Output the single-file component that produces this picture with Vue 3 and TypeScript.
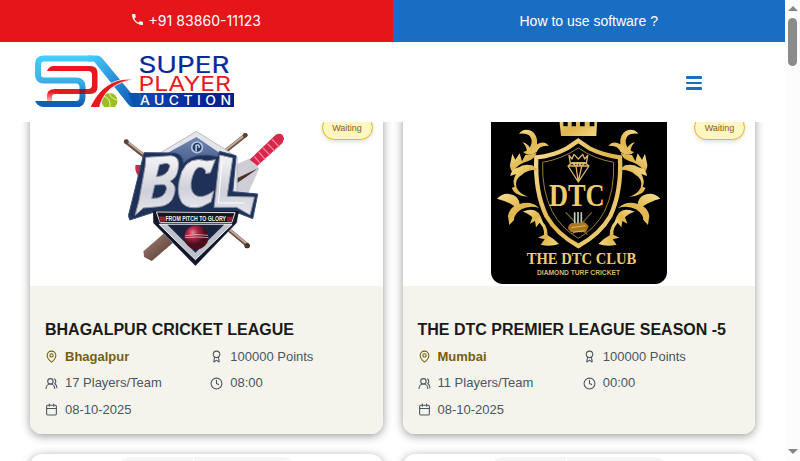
<script setup lang="ts">
interface Auction {
  id: number
  logo: 'bcl' | 'dtc' | 'blank'
  title: string
  city: string
  points: string
  players: string
  time: string
  date: string
}

const auctions: Auction[] = [
  { id: 1, logo: 'bcl', title: 'BHAGALPUR CRICKET LEAGUE', city: 'Bhagalpur', points: '100000 Points', players: '17 Players/Team', time: '08:00', date: '08-10-2025' },
  { id: 2, logo: 'dtc', title: 'THE DTC PREMIER LEAGUE SEASON -5', city: 'Mumbai', points: '100000 Points', players: '11 Players/Team', time: '00:00', date: '08-10-2025' },
  { id: 3, logo: 'blank', title: '', city: '', points: '', players: '', time: '', date: '' },
  { id: 4, logo: 'blank', title: '', city: '', points: '', players: '', time: '', date: '' },
]

const leafSides = ['', 'translate(592 0) scale(-1 1)']
</script>

<template>
  <div class="window">
    <div class="page">
      <div class="topbar">
        <a class="phone">
          <svg class="phone-icon" viewBox="3 3 18 18"><path fill="#fff" d="M6.540 3H4a1 1 0 0 0-1 1c0 9.390 7.610 17 17 17a1 1 0 0 0 1-1v-3.490a1 1 0 0 0-1-1c-1.240 0-2.450-.2-3.570-.57a1 1 0 0 0-1.020.240l-2.200 2.200a15.050 15.050 0 0 1-6.590-6.590l2.200-2.210a1 1 0 0 0 .250-1A11.360 11.360 0 0 1 8.500 4a1 1 0 0 0-1-1z" /></svg>
          <span>+91 83860-11123</span>
        </a>
        <a class="howto">How to use software ?</a>
      </div>

      <header class="navbar">
        <svg class="brand" viewBox="35 54 200 54">
          <defs>
            <linearGradient id="sky" gradientUnits="userSpaceOnUse" x1="88" y1="56" x2="140" y2="107">
              <stop offset="0" stop-color="#45cdff" /><stop offset=".4" stop-color="#2f98dd" /><stop offset="1" stop-color="#0b52b0" />
            </linearGradient>
            <linearGradient id="skyS" gradientUnits="userSpaceOnUse" x1="0" y1="56" x2="0" y2="107">
              <stop offset="0" stop-color="#45d0ff" /><stop offset=".5" stop-color="#3aaeea" /><stop offset="1" stop-color="#0b57a8" />
            </linearGradient>
            <linearGradient id="bar" x1="0" y1="0" x2="1" y2="0">
              <stop offset="0" stop-color="#0b57b5" /><stop offset=".6" stop-color="#052a9b" /><stop offset="1" stop-color="#031d8c" />
            </linearGradient>
            <linearGradient id="fade" gradientUnits="userSpaceOnUse" x1="0" y1="92" x2="0" y2="103">
              <stop offset="0" stop-color="#e6191f" /><stop offset="1" stop-color="#e6191f" stop-opacity=".15" />
            </linearGradient>
            <clipPath id="logoBase"><rect x="35" y="54" width="200" height="53" /></clipPath>
          </defs>
          <g clip-path="url(#logoBase)">
            <path d="M126 93H234V107H134Z" fill="url(#bar)" />
            <path d="M92 58.500H44Q38 58.500 38 64V74.500Q38 80.500 44 80.500H76Q82.500 80.500 82.500 87V97Q82.500 104 76 104H44" fill="none" stroke="url(#skyS)" stroke-width="6" />
            <path d="M35 101H76L80 107H44Q38 107 35 101Z" fill="#0d60b3" />
            <path d="M88 55.500H97Q100 55.500 102 58L131 93H140L148 107H132Q130 107 128 104L94 61.500H88Z" fill="url(#sky)" />
            <path d="M128 93H139V107H134Z" fill="#0b52b0" />
            <path d="M47 71Q49 66 54 66H90Q97.500 66 97.500 73V87Q97.500 94 90 94H58V89H88Q92 89 92 85V75Q92 71 88 71Z" fill="#e6191f" />
            <path d="M59 89H55Q47 89 47 96V103H52V97Q52 94 55 94H59Z" fill="url(#fade)" />
            <path d="M79.500 89H85.500V94H79.500Z" fill="#9b1625" />
            <circle cx="109.500" cy="101" r="8" fill="#9dbe22" />
            <path d="M103 96Q111 97 110 108M109 93Q112 100 118 100" stroke="#eaf5b5" stroke-width="1" fill="none" />
            <path d="M89 110C98 88 114 77 134 79.500C116 82 102 91 99 110Z" fill="#e6191f" stroke="#fff" stroke-width=".8" />
          </g>
          <text x="138.500" y="72.600" class="brand-super" textLength="91" lengthAdjust="spacingAndGlyphs">SUPER</text>
          <text x="138.500" y="90.800" class="brand-player" textLength="92.500" lengthAdjust="spacingAndGlyphs">PLAYER</text>
          <text x="140" y="105" class="brand-auction" textLength="95.500" lengthAdjust="spacingAndGlyphs">AUCTION</text>
        </svg>
        <button class="menu" aria-label="Menu"><i></i><i></i><i></i></button>
      </header>

      <main class="viewport">
        <section class="cards">
          <article v-for="a in auctions" :key="a.id" class="card">
            <div class="cover">
              <svg v-if="a.logo === 'bcl'" class="art" viewBox="24.75 -21 528 528">
                <defs>
                  <linearGradient id="silver" x1="0" y1="0" x2="0" y2="1"><stop offset="0" stop-color="#f4f4f7" /><stop offset=".6" stop-color="#cfd0d9" /><stop offset="1" stop-color="#e6e6ee" /></linearGradient>
                  <linearGradient id="navy" x1="0" y1="0" x2="0" y2="1"><stop offset="0" stop-color="#7187b4" /><stop offset=".35" stop-color="#2d4674" /><stop offset="1" stop-color="#101a31" /></linearGradient>
                  <linearGradient id="wood" x1="0" y1="0" x2="1" y2="1"><stop offset="0" stop-color="#a58678" /><stop offset="1" stop-color="#4c3028" /></linearGradient>
                  <radialGradient id="ball" cx=".35" cy=".3"><stop offset="0" stop-color="#ee8395" /><stop offset=".4" stop-color="#b32945" /><stop offset="1" stop-color="#4b0d1c" /></radialGradient>
                </defs>
                <path d="M48 80L120 136M408 60L330 122M350 338L415 392" stroke="#6b4f45" stroke-width="12" stroke-linecap="round" />
                <path d="M50 78L120 132M405 60L330 119M350 336L412 387" stroke="#c4aa9b" stroke-width="6" stroke-linecap="round" />
                <circle cx="50" cy="80" r="7" fill="#5b433b" /><circle cx="406" cy="61" r="7" fill="#5b433b" /><circle cx="412" cy="392" r="8" fill="#49342e" />
                <path d="M163 355L101 409L103 426L126 438L196 378Z" fill="url(#wood)" />
                <path d="M77 150L100 150L91 190Q74 174 77 150Z" fill="#c62e49" />
                <path d="M375 150L432 125L448 162L410 246L360 260Z" fill="#cfcdd6" />
                <path d="M360 200L445 160L410 185L365 215Z" fill="#4b302c" />
                <path d="M420 134L498 59Q519 50 523 72L518 84L443 152Z" fill="#d9264a" />
                <path d="M434 124L452 146M447 111L467 134M460 99L481 121M473 86L495 108M487 73L509 96" stroke="#f58095" stroke-width="4" />
                <path d="M260 49L382 126L382 321L257 452L131 323L131 126Z" fill="#e4e5eb" stroke="#b9bbc5" stroke-width="3" />
                <path d="M260 66L366 139L366 320L257 430L145 318L145 130Z" fill="url(#navy)" />
                <path d="M103 113L196 114Q220 119 221 145Q253 109 325 125L329 109L379 122L369 230L444 237L429 311L380 292L131 292L60 315L56 302Z" fill="#1f3157" stroke="#3b5078" stroke-width="3" />
                <path d="M130 288H388L380 324L257 452L131 324Z" fill="#11182a" />
                <path d="M148 328H367L257 434Z" fill="#bfc1ca" stroke="#f4f4f4" stroke-width="3" />
                <path d="M173 329H343L257 413Z" fill="#182440" />
                <circle cx="262" cy="97" r="16" fill="#243d67" stroke="#b8c5dd" stroke-width="5" />
                <path d="M259 109V91Q270 86 268 99" fill="none" stroke="#dde7f5" stroke-width="4" />
                <g fill="url(#silver)" stroke="#8b90a3" stroke-width="3" stroke-linejoin="round">
                  <path fill-rule="evenodd" d="M108 127L184 122Q213 124 205 163Q201 190 181 199Q203 210 193 240Q184 272 147 275L101 279L76 301L88 255L106 155ZM149 149L140 185Q174 183 180 154Q180 146 169 145ZM135 210L126 250Q164 252 170 223Q171 209 160 209Z" />
                  <path d="M302 173L317 134L291 138Q238 121 216 170Q195 230 216 263Q237 286 276 275L304 261L312 228Q276 254 256 240Q236 223 248 185Q259 151 276 158Q289 161 288 176Z" />
                  <path d="M330 120L369 129L352 244L434 246L421 300L380 277L313 277Z" />
                </g>
                <path d="M337 138L326 264L405 264" fill="none" stroke="#fff" stroke-width="3" />
                <path d="M140 291L376 293L366 323H151Z" fill="#16171d" stroke="#e4e4e8" stroke-width="3" />
                <path d="M148 304L166 305V320H150ZM352 305H370L365 320H352Z" fill="#8c2532" />
                <text x="167" y="317" class="bcl-tag" textLength="182" lengthAdjust="spacingAndGlyphs">FROM PITCH TO GLORY</text>
                <circle cx="260" cy="367" r="36" fill="url(#ball)" />
                <path d="M226 362Q261 356 295 361M226 368Q261 364 296 368" stroke="#ebdadd" stroke-width="2" fill="none" />
              </svg>

              <svg v-else-if="a.logo === 'dtc'" class="art rounded" viewBox="33 -21 528 528">
                <defs>
                  <linearGradient id="gold" x1="0" y1="0" x2="1" y2="1"><stop offset="0" stop-color="#f8df94" /><stop offset=".5" stop-color="#dfb64d" /><stop offset="1" stop-color="#f4d786" /></linearGradient>
                </defs>
                <rect x="33" y="-21" width="528" height="528" fill="#000" />
                <path d="M236 -5L243 63H349L353 -5L343 10V34H329V10H314V34H300V10H288V34H275V10H263V34H250V10Z" fill="url(#gold)" />
                <path d="M295 77L330 101Q374 122 420 127Q425 229 391 303Q360 358 295 393Q231 358 199 303Q164 229 169 127Q217 123 261 100Z" fill="none" stroke="url(#gold)" stroke-width="13" />
                <path d="M295 99Q343 132 401 142Q404 228 373 290Q347 339 295 370Q243 339 217 290Q185 228 188 142Q246 132 295 99Z" fill="none" stroke="#9d7e32" stroke-width="3" />
                <g v-for="side in leafSides" :key="side" :transform="side" fill="url(#gold)">
                  <path d="M117 56Q131 37 155 48Q174 60 171 88Q192 75 207 93Q180 89 170 111Q147 128 129 111Q145 108 152 92Q160 73 147 61Q137 53 117 56Z" />
                  <path d="M127 82Q145 86 150 100L141 110Q139 92 127 82Z" />
                  <path d="M97 116L106 134L119 115L126 139L136 120Q151 120 170 113Q165 130 145 138Q113 146 97 172Q87 155 91 145Z" />
                  <path d="M91 183Q94 161 117 157Q130 145 157 151L178 167Q148 160 126 179Q102 192 110 218Q119 237 144 245Q105 244 95 219L104 215Q96 198 108 177Z" />
                  <path d="M51 251Q73 228 99 240Q116 246 119 267Q151 255 178 279Q149 270 124 283Q101 299 102 315L88 330L84 303Q87 284 103 274Q85 260 51 251Z" />
                  <path d="M128 290Q158 276 176 294Q189 314 193 343L179 323L168 337L165 318L150 326L157 307Q148 296 128 290Z" />
                  <path d="M174 309Q203 326 203 361Q219 369 237 387Q211 396 182 389L194 373L174 368L192 359Q194 338 174 309Z" />
                </g>
                <path d="M267 121L276 132L282 118L295 132L308 118L314 132L323 121L319 146H271ZM264 153L276 143H315L327 153L295 201ZM264 153H327M276 143L288 154L295 201L305 154L315 143M288 154L295 144L305 154" fill="none" stroke="#dbb569" stroke-width="4" stroke-linejoin="round" />
                <text x="207" y="273" class="dtc-main" textLength="167" lengthAdjust="spacingAndGlyphs">DTC</text>
                <path d="M257 292L322 359M335 292L276 359" stroke="#6e5a32" stroke-width="4" />
                <path d="M284 292V329M294 291V329M304 292V329" stroke="#b9d0bd" stroke-width="5" />
                <path d="M264 341Q265 319 292 326Q313 313 326 334L318 352H273Z" fill="#a9751d" />
                <path d="M274 338L316 332M279 352L313 347" stroke="#d9b76e" stroke-width="3" />
                <text x="140" y="447" class="dtc-club" textLength="329" lengthAdjust="spacingAndGlyphs">THE DTC CLUB</text>
                <text x="171" y="479" class="dtc-tag" textLength="249" lengthAdjust="spacingAndGlyphs">DIAMOND TURF CRICKET</text>
              </svg>

              <div v-else class="art blank"></div>
              <span v-if="a.title" class="badge">Waiting</span>
            </div>

            <div v-if="a.title" class="body">
              <h3>{{ a.title }}</h3>
              <div class="facts">
                <div class="fact city">
                  <svg class="icon" viewBox="0 0 24 24"><path d="M20 10c0 5-5.500 10.200-7.400 11.800a1 1 0 0 1-1.200 0C9.500 20.200 4 15 4 10a8 8 0 0 1 16 0" /><circle cx="12" cy="10" r="3" /></svg>
                  <span>{{ a.city }}</span>
                </div>
                <div class="fact">
                  <svg class="icon" viewBox="0 0 24 24"><path d="m15.500 12.900 1.500 8.500a.5.5 0 0 1-.8.500l-3.600-2.700a1 1 0 0 0-1.200 0l-3.600 2.700a.5.5 0 0 1-.8-.5l1.500-8.500" /><circle cx="12" cy="8" r="6" /></svg>
                  <span>{{ a.points }}</span>
                </div>
                <div class="fact">
                  <svg class="icon" viewBox="0 0 24 24"><path d="M18 21a8 8 0 0 0-16 0" /><circle cx="10" cy="8" r="5" /><path d="M22 20c0-3.400-2-6.500-4-8a5 5 0 0 0-.5-8.300" /></svg>
                  <span>{{ a.players }}</span>
                </div>
                <div class="fact">
                  <svg class="icon" viewBox="0 0 24 24"><circle cx="12" cy="12" r="10" /><path d="M12 6v6l4 2" /></svg>
                  <span>{{ a.time }}</span>
                </div>
                <div class="fact">
                  <svg class="icon" viewBox="0 0 24 24"><path d="M8 2v4M16 2v4M3 10h18" /><rect x="3" y="4" width="18" height="18" rx="2" /></svg>
                  <span>{{ a.date }}</span>
                </div>
              </div>
            </div>
          </article>
        </section>
      </main>
    </div>

    <aside class="scrollbar">
      <svg class="arrow" viewBox="0 0 10 5"><path d="M0 5L5 0L10 5Z" /></svg>
      <div class="thumb"></div>
      <svg class="arrow down" viewBox="0 0 10 5"><path d="M0 0H10L5 5Z" /></svg>
    </aside>
  </div>
</template>

<style>
body { margin: 0; overflow: hidden; background: #fff; }
</style>

<style scoped>
* { box-sizing: border-box; }
.window { display: flex; width: 800px; height: 461px; font-family: "Liberation Sans", Arial, sans-serif; background: #fff; overflow: hidden; }
.page { display: flex; flex-direction: column; width: 785px; }
.topbar { display: grid; grid-template-columns: 1fr 1fr; height: 42px; flex: none; color: #fff; }
.phone, .howto { display: flex; align-items: center; justify-content: center; }
.phone { gap: 5px; padding-left: 1px; background: #e51519; font: 14.100px/20px Inter, sans-serif; white-space: nowrap; }
.phone-icon { width: 11px; height: 11px; margin-top: -4px; }
.howto { background: #196dc2; font-size: 14px; }
.navbar { display: flex; flex: none; align-items: center; justify-content: space-between; height: 80px; padding: 0 83px 0 35px; background: #fff; }
.brand { width: 200px; height: 54px; margin-top: -2px; overflow: visible; }
.brand-super { font: 22.800px Inter, sans-serif; fill: #062a9b; stroke: #062a9b; stroke-width: .2px; }
.brand-player { font: 20.500px Inter, sans-serif; fill: #e81b22; }
.brand-auction { font: 500 12.500px Inter, sans-serif; letter-spacing: 4px; fill: #fff; }
.bcl-tag { font: bold 19px "Liberation Sans", sans-serif; fill: #f0f0f0; }
.dtc-main { font: bold 92px "Liberation Serif", serif; fill: #efcc70; }
.dtc-club { font: bold 48px "Liberation Serif", serif; fill: #efcc70; }
.dtc-tag { font: bold 19px "Liberation Sans", sans-serif; fill: #dcb65c; }
.menu { display: flex; flex-direction: column; gap: 2.800px; width: 16px; margin-top: 2px; padding: 0; border: 0; background: none; }
.menu i { height: 2.800px; border-radius: 1px; background: #196dc2; }
.viewport { flex: 1; min-height: 0; overflow: hidden; }
.cards { display: grid; grid-template-columns: 1fr 1fr; grid-auto-rows: 329px; gap: 20px; margin-top: -17px; padding: 0 30px; }
.card { position: relative; border-radius: 12px; background: #fff; box-shadow: 0 2px 10px rgba(0, 0, 0, .4); overflow: hidden; }
.cover { display: flex; justify-content: center; height: 181px; padding-top: 3px; }
.art { display: block; width: 176px; height: 176px; }
.rounded { border-radius: 12px; overflow: hidden; }
.blank { border-radius: 12px; background: linear-gradient(90deg, #f5f5f5 75px, #fff 75px, #fff 76px, #f5f5f5 76px); }
.badge { position: absolute; top: 10px; right: 10px; display: flex; align-items: center; justify-content: center; width: 51px; height: 25px; border: 1px solid #eab420; border-radius: 13px; background: #fef7c2; color: #92561a; font-size: 9px; box-shadow: 0 2px 4px rgba(0, 0, 0, .12); }
.body { height: 148px; padding: 32px 15px 0; background: #f5f4ec; }
h3 { margin: 0; color: #1a1a1a; font-size: 16px; line-height: 24px; white-space: nowrap; }
.facts { display: grid; grid-template-columns: 1fr 1fr; grid-auto-rows: 18.500px; gap: 8px; margin-top: 5.500px; }
.fact { display: flex; align-items: center; gap: 7px; color: #4b5563; font-size: 13px; line-height: 18.500px; }
.city { color: #74600c; font-weight: bold; }
.icon { width: 13px; height: 13px; flex: none; margin-top: 0; fill: none; stroke: currentColor; stroke-width: 2; stroke-linecap: round; stroke-linejoin: round; }
.scrollbar { display: flex; flex-direction: column; align-items: center; width: 15px; padding: 6px 0 7px; background: #fcfcfc; }
.arrow { width: 10px; height: 5px; fill: #858585; }
.thumb { width: 9px; height: 48px; margin-top: 7px; border-radius: 5px; background: #8b8b8b; }
.down { margin-top: auto; }
</style>
